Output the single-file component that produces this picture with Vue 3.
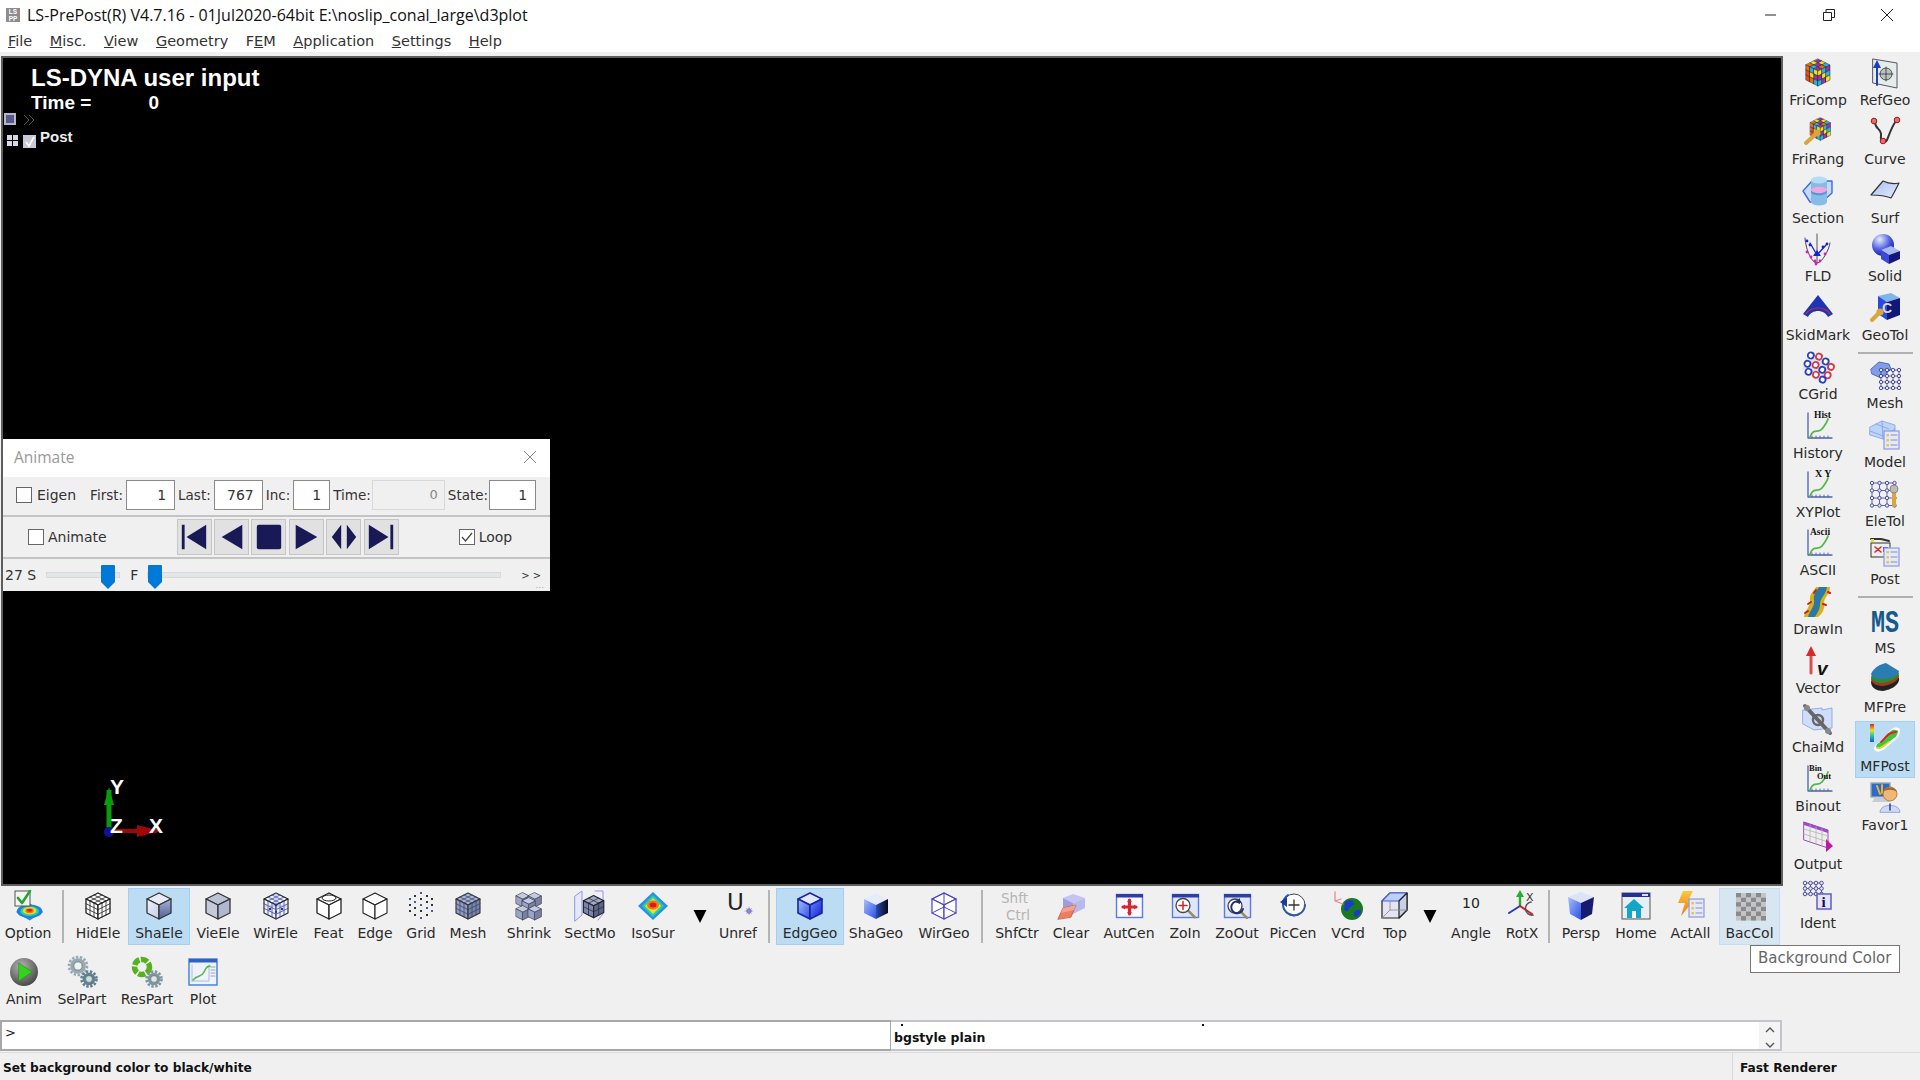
<script setup>
// small svg helpers, every icon is a 32x32 string built from these
const P = (d, f = "none", s = "none", w = 1) =>
  `<path d="${d}" fill="${f}" stroke="${s}" stroke-width="${w}" stroke-linejoin="round" stroke-linecap="round"/>`;
const C = (x, y, r, f = "none", s = "none", w = 1) =>
  `<circle cx="${x}" cy="${y}" r="${r}" fill="${f}" stroke="${s}" stroke-width="${w}"/>`;
const R = (x, y, w, h, f = "none", s = "none", sw = 1) =>
  `<rect x="${x}" y="${y}" width="${w}" height="${h}" fill="${f}" stroke="${s}" stroke-width="${sw}"/>`;
const T = (x, y, txt, size, f = "#111", fam = "Liberation Serif", weight = "bold") =>
  `<text x="${x}" y="${y}" font-size="${size}" fill="${f}" font-family="${fam}" font-weight="${weight}">${txt}</text>`;

const cube = (t, l, r, s = "none", w = 1.3) =>
  P("M16 3L28 9L16 15L4 9Z", t, s, w) + P("M4 9L16 15V29L4 23Z", l, s, w) + P("M16 15L28 9V23L16 29Z", r, s, w);

const faceLines = (o, u, v, n, s, w) => {
  let out = "";
  for (let i = 1; i < n; i++) {
    const k = i / n;
    out += P(`M${o[0] + u[0] * k} ${o[1] + u[1] * k}l${v[0]} ${v[1]}`, "none", s, w);
    out += P(`M${o[0] + v[0] * k} ${o[1] + v[1] * k}l${u[0]} ${u[1]}`, "none", s, w);
  }
  return out;
};
const cubeGrid = (s, w = 0.9, n = 3) =>
  faceLines([16, 3], [12, 6], [-12, 6], n, s, w) +
  faceLines([4, 9], [12, 6], [0, 14], n, s, w) +
  faceLines([16, 15], [12, -6], [0, 14], n, s, w);

const cells = (o, u, v, cols) => {
  const n = Math.sqrt(cols.length);
  let out = "";
  cols.forEach((c, i) => {
    const a = (i % n) / n;
    const b = Math.floor(i / n) / n;
    const x = o[0] + u[0] * a + v[0] * b;
    const y = o[1] + u[1] * a + v[1] * b;
    out += P(`M${x} ${y}l${u[0] / n} ${u[1] / n}l${v[0] / n} ${v[1] / n}l${-u[0] / n} ${-u[1] / n}Z`, c, "#222", 0.5);
  });
  return out;
};
const rubik = () =>
  cells([16, 2], [12, 6], [-12, 6], ["#a02fb0", "#f2e31c", "#23b5e8", "#f2e31c", "#a02fb0", "#ef6a14", "#ef6a14", "#23b5e8", "#a02fb0"]) +
  cells([4, 8], [12, 6], [0, 15], ["#ef6a14", "#23b5e8", "#f2e31c", "#ee4b14", "#f2e31c", "#a02fb0", "#ee4b14", "#ef6a14", "#23b5e8"]) +
  cells([16, 14], [12, -6], [0, 15], ["#f2e31c", "#23b5e8", "#a02fb0", "#a02fb0", "#f2e31c", "#23b5e8", "#23b5e8", "#a02fb0", "#f2e31c"]);

const win = (inner = "", bg = "#dfe6fb", bar = "#2c3ea6") =>
  R(3.5, 4.5, 26, 23, bg, "#5c7ae4", 1.4) + R(3, 4, 27, 3.5, bar) + inner;
const lens = (x, y, r, inner = "") =>
  P(`M${x + r * 0.7} ${y + r * 0.7}l7 7`, "none", "#9a8a5c", 2.6) + C(x, y, r, "#fff", "#444", 1.3) + inner;

const gear = (x, y, r, f = "#8f9ea8", hole = "#e8f0f0") =>
  C(x, y, r, "none", f, 2.6).replace("/>", ` stroke-dasharray="2.4 1.6"/>`) + C(x, y, r - 1.2, f) + C(x, y, r * 0.45, hole, "#567", 0.6);

const chart = (label) =>
  P("M6 3V28H30", "none", "#4f61a8", 1.3) +
  P("M10 28v-2M14 28v-2M18 28v-2M22 28v-2M26 28v-2", "none", "#4f61a8", 0.9) +
  P("M8 27C12 17 16 24 20 19S25 12 26 9", "none", "#52b848", 1.8) +
  label;

const nodes = (x, y, nx, ny, st, s = "#3c3f8f", r = 1.7, f = "#e8e8ff") => {
  let out = "";
  for (let i = 0; i < nx; i++) out += P(`M${x + i * st} ${y}v${(ny - 1) * st}`, "none", s, 0.8);
  for (let j = 0; j < ny; j++) out += P(`M${x} ${y + j * st}h${(nx - 1) * st}`, "none", s, 0.8);
  for (let i = 0; i < nx; i++) for (let j = 0; j < ny; j++) out += C(x + i * st, y + j * st, r, f, s, 0.9);
  return out;
};
const list = (x, y) =>
  R(x, y, 15, 18, "#e4e8fb", "#8c98df", 1.2) +
  P(`M${x + 7} ${y + 4}h6M${x + 7} ${y + 9}h6M${x + 7} ${y + 14}h6`, "none", "#8a90a8", 1) +
  R(x + 2.5, y + 3, 2.4, 2.4, "#e8c63c") + R(x + 2.5, y + 8, 2.4, 2.4, "#e8c63c") + R(x + 2.5, y + 13, 2.4, 2.4, "#e8c63c");
const wrench = (x1, y1, x2, y2, c = "#d8a63c") =>
  P(`M${x1} ${y1}L${x2} ${y2}`, "none", c, 4) + C(x2, y2, 3.6, c);
const blob = () =>
  `<ellipse cx="16" cy="15" rx="15" ry="11" fill="#1c7fe0"/><ellipse cx="16" cy="15" rx="11" ry="8" fill="#22d0b0"/>` +
  `<ellipse cx="16" cy="14" rx="8" ry="6" fill="#e8e020"/><ellipse cx="16" cy="14" rx="5" ry="4" fill="#f07018"/><ellipse cx="16" cy="13.5" rx="3" ry="2.2" fill="#e01818"/>`;

const checker = () => {
  let out = "";
  for (let i = 0; i < 6; i++) for (let j = 0; j < 6; j++) {
    if ((i + j) % 2 === 0) out += R(2 + i * 5, 3 + j * 4.6, 5, 4.6, "#8a8a8a");
    else out += R(2 + i * 5, 3 + j * 4.6, 5, 4.6, "#c4c4c4");
  }
  return out;
};
const small = (x, y) =>
  `<g transform="translate(${x} ${y}) scale(.55)">${cube("#c4cbe0", "#98a4c8", "#76829f", "#445")}</g>`;

const icons = {
  option:
    `<g transform="translate(4 12) scale(.85 .62)">${P("M16 2L32 16L16 30L0 16Z", "#2a86e8")}${blob()}</g>` +
    R(3, 1, 15, 15, "#f4f4f4", "#555", 1) + P("M6 8l4 5l8-12", "none", "#27a52a", 2.6),
  hidele: cube("#fff", "#fff", "#fff", "#222") + cubeGrid("#222", 0.8, 3),
  shaele: cube("#e9ebf7", "url(#gLight)", "url(#gSlate)", "#333"),
  vieele: cube("#bcc2d6", "#c4cadc", "#b0b7ce", "#333"),
  wirele: cube("#f0f2fa", "#f0f2fa", "#f0f2fa", "#222", 1.1) + cubeGrid("#36449c", 0.8, 3) + P("M16 3V29M4 16L28 16", "none", "#8a96cc", 0.7) + C(16, 15, 1.4, "#27348f") + C(10, 19, 1.2, "#27348f") + C(22, 19, 1.2, "#27348f") + C(16, 22, 1.2, "#27348f"),
  feat: cube("#fff", "#fff", "#fff", "#222") + `<ellipse cx="16" cy="8" rx="7" ry="3" fill="none" stroke="#222"/>`,
  edge: cube("#fff", "#fff", "#fff", "#222", 1.1),
  grid: [[16, 3], [10, 6], [22, 6], [5, 9], [16, 9], [27, 9], [10, 12], [22, 12], [5, 15], [16, 15], [27, 15], [10, 18], [22, 18], [5, 21], [16, 21], [27, 21], [10, 25], [22, 25], [16, 28]]
    .map(([x, y], i) => R(x - 1, y - 1, 2, 2, i % 3 === 0 ? "#4b5a96" : "#333")).join(""),
  mesh: cube("#a8b4d8", "#8f9cc4", "#7583ad", "#333", 1.1) + cubeGrid("#3a4060", 0.7, 3),
  shrink: small(1, 1) + small(13, 1) + small(7, 6) + small(1, 14) + small(13, 14),
  sectmo:
    P("M1 6L8 1V25L1 31Z", "#e6e8f8", "#8f96e8", 1) + P("M21 1H29V24L24 30", "#eef0fa", "#8f96e8", 1) +
    `<g transform="translate(6 3) scale(.85)">${cube("#a0aac4", "#7a86a6", "#5c6786", "#223")}${cubeGrid("#223", 0.8, 2)}</g>`,
  isosur: `<g>${P("M16 2L31 16L16 30L1 16Z", "#2a8ee8")}${P("M16 5L27 16L16 27L5 16Z", "#24d0a8")}${P("M16 8L24 16L16 24L8 16Z", "#e4e420")}<ellipse cx="16" cy="15" rx="6" ry="4.6" fill="#f07818"/><ellipse cx="16" cy="15" rx="3.4" ry="2.5" fill="#e01a1a"/></g>`,
  down: P("M9.5 20H22.5L16 33Z", "#000"),
  unref:
    T(5, 20, "U", 23, "#222", "DejaVu Sans", "normal") +
    C(27, 21, 2.3, "#8a8ad8", "#5555aa", 0.7) + P("M27 17v8M23 21h8M24.5 18.5l5 5M24.5 23.5l5-5", "none", "#8a8ad8", 0.6),
  edggeo: cube("#e2e9fb", "url(#gBlueL)", "url(#gBlueR)", "#1a22a8", 1.6),
  shageo: cube("#e6ecfb", "url(#gBlueL)", "url(#gBlack)"),
  wirgeo: cube("#fff", "#fff", "#fff", "#4a44c4", 1.2) + P("M4 9L16 3L28 9M16 17L4 23M16 17L28 23M16 17V3", "none", "#4a44c4", 1),
  shfctr: T(0, 13, "Shft", 13.5, "#b4b4b4", "DejaVu Sans", "normal") + T(5, 30, "Ctrl", 13.5, "#b4b4b4", "DejaVu Sans", "normal"),
  clear:
    P("M8 8L18 4L30 8L18 13Z", "#c3c4f0") + P("M8 8L18 13V24L8 18Z", "#9d9ee0") + P("M18 13L30 8V18L18 24Z", "#b8baee") +
    P("M3 29L8 18L21 15L16 27Z", "#ee7c60", "#c65038", 0.8) + P("M8 18L21 15L19 20L6 23Z", "#f4a090"),
  autcen: win(P("M16.5 10v14M10 17h13", "none", "#d8262c", 3.2) + P("M14 12h5l-2.5-3ZM14 22h5l-2.5 3ZM12 14.5v5l-3-2.5ZM21 14.5v5l3-2.5Z", "#d8262c"), "#fafaff"),
  zoin: win("", "#dfe6fb") + lens(14, 15.5, 7) + P("M10 15.5h8M14 11.5v8", "none", "#d02424", 1.5),
  zoout: win("", "#dfe6fb") + lens(14, 16, 7) + P("M19 12a6 6 0 1 0 3 7", "none", "#222f6a", 2) + P("M14 12l5-4v6Z", "#222f6a"),
  piccen:
    C(17, 15, 11, "#fff", "#445", 1) + P("M28 15A11 11 0 1 1 11 5", "none", "#2d5aa8", 2) + P("M17 10v10M12 15h10", "none", "#333", 1.3) + P("M3 12L10 7V17Z", "#1c3c96"),
  vcrd:
    C(20, 19, 11, "#1a7a24") + P("M13 12c4-3 8-2 9 1s-4 3-5 6s-4 3-5 0ZM23 21c3-2 5-1 6 0s-3 6-5 6s-3-4-1-6Z", "#1c3cc8") +
    P("M3 2v9l8 3M3 11l6-2", "none", "#e88a8a", 1.3),
  top:
    P("M3 11L11 3H28V20L20 28H3Z", "#e4e4f2", "#222", 1.2) + P("M3 11H20L28 3H11Z", "#bcd0fb", "#4c60dc", 1.2) + P("M20 11V28L28 20V3Z", "#c8d0e8", "#222", 1.2) + P("M3 28L11 20H28M11 20V12", "none", "#888", 0.8),
  angle: T(7, 18, "10", 14, "#222", "DejaVu Sans", "normal"),
  rotx:
    P("M14 16V4", "none", "#22b030", 2.4) + P("M10 7L14 0L18 7Z", "#22b030") + P("M14 16L3 23", "none", "#2a34d0", 2) + P("M14 16L26 24", "none", "#d02020", 2) +
    T(20, 11, "X", 11, "#333", "DejaVu Sans", "normal") + P("M25 12a6 6 0 1 0 2 13", "none", "#555", 1.6),
  persp: P("M16 2L29 7L16 13L3 7Z", "#dce4fa") + P("M3 7L16 13V30L5 24Z", "url(#gBlueL)") + P("M16 13L29 7L27 24L16 30Z", "#181c70"),
  home:
    R(2, 3, 28, 26, "#e8eef2", "#555", 1) + R(2, 3, 28, 4, "#1e2f9e") + R(22, 4, 6, 2, "#dde") +
    P("M4 18L14 9L24 18H21V28H7V18Z", "#12a6c8") + R(12, 21, 4, 7, "#fff"),
  actall:
    P("M8 1H18L14 9H20L6 26L10 13H3Z", "url(#gBolt)") + list(14, 9),
  baccol: checker(),
  anim:
    C(16, 16, 14, "url(#gSphere)") + P("M11 7L24 16L11 25Z", "#37d21e", "#1d9a10", 0.7),
  selpart: gear(12, 10, 9, "#98a8b0", "#eef4f0") + gear(23, 23, 7.5, "#5f8090", "#cfe0d8"),
  respart:
    `<circle cx="11" cy="11" r="7.5" fill="none" stroke="#58b020" stroke-width="5.5" stroke-dasharray="7 1.5"/>` + gear(23, 23, 7.5, "#7f96a0", "#dfe8e0"),
  plot:
    R(2, 3, 28, 26, "#eef2fb", "#3f7ed8", 1.4) + R(2, 3, 28, 3.5, "#2f62c0") + P("M5 25H22V9M5 9V25", "none", "#9fb0d0", 0.8) + P("M6 24C12 18 14 22 17 16S20 11 23 10", "none", "#55b848", 1.6) + P("M24 11h4M24 14h4M24 17h4M24 20h4", "none", "#9aa4c4", 1.2),

  fricomp: rubik(),
  refgeo:
    P("M4 2L28 6V31L4 26Z", "#e6ecea", "#556", 1) + C(17, 17, 6, "#b8c4c0", "#333", 0.8) + P("M17 10v14M10 17h14", "none", "#333", 0.8) + P("M8 28V9", "none", "#1e3cc0", 2) + P("M4 11L8 3L12 11Z", "#1e3cc0"),
  frirang: `<g transform="translate(5 0) scale(.84)">${rubik()}</g>` + wrench(4, 27, 15, 17),
  curve: P("M6 6C6 14 13 12 12 20C11 26 16 28 18 24C20 19 23 10 27 5", "none", "#333", 2) + C(5, 5, 2.8, "#e86a6a", "#a01818", 1) + C(14, 25, 2.8, "#e86a6a", "#a01818", 1) + C(28, 4, 2.8, "#e86a6a", "#a01818", 1),
  surf: P("M2 20L14 6C20 9 25 9 30 8C27 14 24 20 22 23C15 20 8 20 2 20Z", "url(#gSurf)", "#333", 1.2),
  section:
    P("M1 16L10 6H30V18L20 27H8Z", "#c8dafc", "#3c6be8", 1.4) +
    P("M9 5V27A8 3.4 0 0 0 25 27V5Z", "#86bce6") + `<ellipse cx="17" cy="5" rx="8" ry="3.4" fill="#b4dcf4"/>` +
    `<ellipse cx="17" cy="15" rx="8" ry="3.2" fill="#f4a4de"/>` + P("M9 15A8 3.2 0 0 0 25 15V17A8 3.2 0 0 1 9 17Z", "#5a94d4"),
  fld:
    P("M15 1V30", "none", "#555", 1) + P("M3 5C4 18 10 30 15 30S27 17 28 10", "none", "#444", 1) + P("M8 10L15 22L24 12", "none", "#1a20d8", 1.3) + P("M15 17l-4 6h8Z", "#1a20d8") +
    [[5, 8], [8, 12], [25, 11], [21, 14]].map(([x, y]) => C(x, y, 1.4, "#1a20d8")).join("") +
    [[5, 19], [9, 24], [13, 28], [18, 28], [23, 21], [14, 31]].map(([x, y]) => C(x, y, 1.4, "#e018c0")).join(""),
  solid:
    C(14, 12, 11, "url(#gBall)") + P("M12 17L22 13L31 18L20 22Z", "#a8b8f0") + P("M12 17L20 22V31L12 26Z", "#3c48d8") + P("M20 22L31 18V26L20 31Z", "#14187c"),
  skidmark:
    P("M1 22L16 3L31 22L26 25C22 17 10 17 6 25Z", "#1c34b8") + P("M4 22C9 14 23 14 28 22", "none", "#d82828", 1.2),
  geotol:
    P("M9 4L22 1L31 6L18 10Z", "#80b4ee") + P("M9 4L18 10V28L9 22Z", "#2848e0") + P("M18 10L31 6V23L18 28Z", "#101878") + T(13, 21, "C", 14, "#d8d8d8", "Liberation Sans") + wrench(3, 28, 11, 20),
  cgrid:
    `<g transform="rotate(22 16 16)">${R(2, 8, 28, 16, "#dfe4fa")}${[[5, 8], [13, 6], [21, 8], [28, 11], [5, 17], [13, 15], [21, 17], [28, 20], [9, 24], [17, 24], [25, 26]]
      .map(([x, y], i) => C(x, y, 3, "#fff", i % 2 ? "#d83848" : "#2840b8", 1.8)).join("")}</g>`,
  panelmesh:
    P("M2 9L10 2L20 4L22 9L12 18L3 14Z", "#7f9ee8", "#3c52a8", 0.8) + nodes(12, 10, 4, 4, 6),
  history: chart(T(12, 8, "Hist", 9.5)),
  model:
    P("M1 8L13 2L26 6V14L14 20L1 16Z", "#bcd4f6", "#7f9ee8", 0.8) + P("M1 12L14 17L26 10M7 5L20 10M13 2L14 20", "none", "#7f9ee8", 0.8) + list(15, 12),
  eletol: nodes(3, 5, 4, 4, 7.5) + wrench(25, 27, 25, 11, "#d8a63c") + C(25, 11, 4, "#bbb", "#777", 0.8),
  xyplot: chart(T(13, 8, "X Y", 10)),
  post:
    R(2, 7, 19, 14, "#eee", "#333", 1) + P("M2 3h10l8 2", "none", "#333", 2) + P("M6 11l6 5M12 11l-6 5", "none", "#d82828", 1.6) + P("M14 11h5v5h-5Z", "#2840d8") + R(2, 3, 3, 3, "#eee020") + list(15, 12),
  ascii: chart(T(8, 8, "Ascii", 9.5)),
  drawin:
    P("M14 1H28C28 9 21 12 22 18S19 29 16 31H2C3 24 9 20 8 14S12 5 14 1Z", "#d8b018") + P("M17 1H25C24 9 18 12 18 18S15 27 13 31H6C8 24 13 20 12 14S15 5 17 1Z", "#2a78a8") + P("M14 4l-2 3M9 16l-3 2M6 25l-3 2M26 6l2 1M21 18l3 1", "none", "#c82020", 2),
  ms: `<text x="2" y="27" font-size="32" font-weight="bold" fill="#145a8c" font-family="Liberation Mono" textLength="28" lengthAdjust="spacingAndGlyphs">MS</text>`,
  vector: P("M9 28V8", "none", "#d85050", 3) + P("M4 11L9 1L14 11Z", "#d82828") + `<text x="15" y="30" font-size="19" font-style="italic" font-weight="bold" fill="#111" font-family="Liberation Sans">v</text>`,
  mfpre:
    P("M2 18C5 9 12 5 17 3L30 14C31 22 20 26 14 27C8 27 2 24 2 18Z", "#222") + P("M2 15C5 6 12 3 17 1L30 11C31 17 21 21 14 22C8 22 3 20 2 15Z", "#a03c1c") + P("M2 13C5 5 12 2 17 0L30 9C30 14 21 18 14 19C8 19 3 17 2 13Z", "#2c8a38") + P("M2 10C5 3 12 0 17 -1L30 7C30 11 21 15 14 15C8 15 3 14 2 10Z", "#2c7cb4"),
  chaimd:
    P("M1 6L20 4V6L30 4V24L12 26L1 20Z", "#cfdcfa", "#7f9ee8", 0.8) + P("M3 2L28 29", "none", "#666", 4) + C(5, 4, 3, "#888") + C(16, 16, 5, "none", "#666", 2.4) + C(26, 27, 3, "#888"),
  mfpost:
    R(1, 1, 4, 18, "url(#gRain)") + P("M5 26C6 18 14 20 18 12S27 3 31 6C32 15 24 18 19 23S8 31 5 26Z", "#fff") + P("M7 24C8 18 14 20 18 13S26 6 29 8C29 14 23 16 19 20S10 28 7 24Z", "#3cc83c") + P("M12 19C15 17 18 12 20 11S25 9 27 9", "none", "#e02020", 2) + P("M8 25C12 26 17 21 20 19", "none", "#e8d820", 1.8),
  binout: chart(T(7, 8, "Bin", 8.5) + T(15, 16, "Out", 8.5)),
  favor1:
    R(2, 1, 19, 14, "#2a6cc8", "#9aa", 1.4) + P("M8 4l3 8M13 3v8", "none", "#f0b030", 2) + P("M3 20h18l-2-5H6Z", "#c8ccd4") +
    C(21, 12, 7, "#f0b878", "#a87028", 0.8) + P("M14 10C15 4 27 4 28 10C24 7 18 7 14 10Z", "#a86824") + P("M11 30C11 21 31 21 31 30Z", "#cfd8f4", "#8898c8", 0.8) + P("M21 22v6", "none", "#2848b8", 1.6),
  output:
    P("M2 1L26 9V27L2 19Z", "#eeeeee", "#9a4ac8", 1) + P("M2 1L26 9V12L2 4Z", "#9a4ac8") + P("M2 8L26 15M2 13L26 21M8 4V21M14 6V23M20 8V25", "none", "#b4b4b4", 0.8) + P("M24 18L31 25L24 31Z", "#c018a0"),
  ident:
    nodes(3, 3, 4, 3, 5.5, "#3c3f8f", 1.8) + R(15, 14, 14, 15, "#e4e4fa", "#6a64c8", 1.6) + T(19.5, 27, "i", 15, "#101058", "Liberation Serif"),
};

const bar1 = [
  { k: "option", t: "Option", w: 56 },
  { sep: true, l: 6, r: 4 },
  { k: "hidele", t: "HidEle", w: 60 },
  { k: "shaele", t: "ShaEle", w: 62, on: true },
  { k: "vieele", t: "VieEle", w: 56 },
  { k: "wirele", t: "WirEle", w: 59 },
  { k: "feat", t: "Feat", w: 47 },
  { k: "edge", t: "Edge", w: 46 },
  { k: "grid", t: "Grid", w: 46 },
  { k: "mesh", t: "Mesh", w: 48 },
  { k: "shrink", t: "Shrink", w: 74 },
  { k: "sectmo", t: "SectMo", w: 48 },
  { k: "isosur", t: "IsoSur", w: 78 },
  { k: "down", t: "", w: 16 },
  { k: "unref", t: "Unref", w: 60 },
  { sep: true, l: 0, r: 6 },
  { k: "edggeo", t: "EdgGeo", w: 68, on: true },
  { k: "shageo", t: "ShaGeo", w: 64 },
  { k: "wirgeo", t: "WirGeo", w: 72 },
  { sep: true, l: 1, r: 7 },
  { k: "shfctr", t: "ShfCtr", w: 54 },
  { k: "clear", t: "Clear", w: 54 },
  { k: "autcen", t: "AutCen", w: 62 },
  { k: "zoin", t: "ZoIn", w: 50 },
  { k: "zoout", t: "ZoOut", w: 54 },
  { k: "piccen", t: "PicCen", w: 58 },
  { k: "vcrd", t: "VCrd", w: 52 },
  { k: "top", t: "Top", w: 42 },
  { k: "down", t: "", w: 28 },
  { k: "angle", t: "Angle", w: 54 },
  { k: "rotx", t: "RotX", w: 48 },
  { sep: true, l: 2, r: 2 },
  { k: "persp", t: "Persp", w: 58 },
  { k: "home", t: "Home", w: 52 },
  { k: "actall", t: "ActAll", w: 57 },
  { k: "baccol", t: "BacCol", w: 61, hover: true },
];
const bar2 = [
  { k: "anim", t: "Anim", w: 48 },
  { k: "selpart", t: "SelPart", w: 68 },
  { k: "respart", t: "ResPart", w: 62 },
  { k: "plot", t: "Plot", w: 50 },
];
const col1 = [
  ["fricomp", "FriComp"], ["frirang", "FriRang"], ["section", "Section"], ["fld", "FLD"], ["skidmark", "SkidMark"],
  ["cgrid", "CGrid"], ["history", "History"], ["xyplot", "XYPlot"], ["ascii", "ASCII"], ["drawin", "DrawIn"],
  ["vector", "Vector"], ["chaimd", "ChaiMd"], ["binout", "Binout"], ["output", "Output"], ["ident", "Ident"],
].map(([k, t]) => ({ k, t }));
const col2 = [
  { k: "refgeo", t: "RefGeo" }, { k: "curve", t: "Curve" }, { k: "surf", t: "Surf" }, { k: "solid", t: "Solid" }, { k: "geotol", t: "GeoTol" },
  { sep: true },
  { k: "panelmesh", t: "Mesh" }, { k: "model", t: "Model" }, { k: "eletol", t: "EleTol" }, { k: "post", t: "Post" },
  { sep: true, wide: true },
  { k: "ms", t: "MS" }, { k: "mfpre", t: "MFPre" }, { k: "mfpost", t: "MFPost", on: true }, { k: "favor1", t: "Favor1" },
];
const menus = [
  ["", "F", "ile"], ["", "M", "isc."], ["", "V", "iew"], ["", "G", "eometry"],
  ["F", "E", "M"], ["", "A", "pplication"], ["", "S", "ettings"], ["", "H", "elp"],
];
const fields = [
  { label: "First:", val: "1", w: 49, g: 3 },
  { label: "Last:", val: "767", w: 49, g: 3 },
  { label: "Inc:", val: "1", w: 37, g: 3 },
  { label: "Time:", val: "0", w: 73, g: 1, off: true },
  { label: "State:", val: "1", w: 47, g: 1 },
];
const playback = [
  "M3 3h3v26H3ZM29 3V29L8 16Z",
  "M27 3V29L5 16Z",
  "M5 3H27Q29 3 29 5V27Q29 29 27 29H5Q3 29 3 27V5Q3 3 5 3Z",
  "M5 3V29L28 16Z",
  "M13 3V29L3 16ZM19 3V29L29 16Z",
  "M3 3V29L24 16ZM26 3h3v26h-3Z",
];
</script>

<template>
  <div class="app">
    <svg class="defs" width="0" height="0">
      <defs>
        <linearGradient id="gLight" x1="0" y1="0" x2="1" y2="1"><stop offset="0" stop-color="#f0f2fb" /><stop offset="1" stop-color="#c3cbe8" /></linearGradient>
        <linearGradient id="gSlate" x1="0" y1="0" x2="0" y2="1"><stop offset="0" stop-color="#a8b3d8" /><stop offset="1" stop-color="#4f5f96" /></linearGradient>
        <linearGradient id="gBlueL" x1="0" y1="0" x2="1" y2="1"><stop offset="0" stop-color="#a8c0fa" /><stop offset="1" stop-color="#2a50e8" /></linearGradient>
        <linearGradient id="gBlueR" x1="0" y1="0" x2="1" y2="1"><stop offset="0" stop-color="#6a88f8" /><stop offset="1" stop-color="#0c20d8" /></linearGradient>
        <linearGradient id="gBlack" x1="0" y1="0" x2="1" y2="0"><stop offset="0" stop-color="#2a4cb0" /><stop offset="1" stop-color="#060818" /></linearGradient>
        <linearGradient id="gSurf" x1="0" y1="0" x2="1" y2="1"><stop offset="0" stop-color="#a8bcf4" /><stop offset="1" stop-color="#e4ecfc" /></linearGradient>
        <linearGradient id="gBolt" x1="0" y1="0" x2="0" y2="1"><stop offset="0" stop-color="#f8c83c" /><stop offset="1" stop-color="#f07818" /></linearGradient>
        <linearGradient id="gRain" x1="0" y1="0" x2="0" y2="1"><stop offset="0" stop-color="#e02020" /><stop offset=".35" stop-color="#e8e020" /><stop offset=".65" stop-color="#20c8a0" /><stop offset="1" stop-color="#2050e0" /></linearGradient>
        <radialGradient id="gSphere" cx=".4" cy=".3" r=".8"><stop offset="0" stop-color="#b4b4b4" /><stop offset="1" stop-color="#3c3c3c" /></radialGradient>
        <radialGradient id="gBall" cx=".35" cy=".25" r=".8"><stop offset="0" stop-color="#e4ecfc" /><stop offset=".6" stop-color="#4858e0" /><stop offset="1" stop-color="#141c90" /></radialGradient>
      </defs>
    </svg>

    <header class="titlebar">
      <div class="appicon"><span>LS</span><span>PP</span></div>
      <div class="title">LS-PrePost(R) V4.7.16 - 01Jul2020-64bit E:\noslip_conal_large\d3plot</div>
      <div class="winbtns">
        <svg width="58" height="28" viewBox="0 0 58 28"><path d="M24 14h11" stroke="#222" /></svg>
        <svg width="58" height="28" viewBox="0 0 58 28"><path d="M24.5 11.5h8v8h-8ZM27 11.5v-3h8.5v8h-3" fill="none" stroke="#222" /></svg>
        <svg width="58" height="28" viewBox="0 0 58 28"><path d="M24 8l12 12M36 8l-12 12" fill="none" stroke="#222" /></svg>
      </div>
    </header>

    <nav class="menubar">
      <span v-for="m in menus" :key="m[1] + m[2]">{{ m[0] }}<u>{{ m[1] }}</u>{{ m[2] }}</span>
    </nav>

    <div class="workspace">
      <div class="leftside">
        <div class="canvas">
          <div class="ov-title">LS-DYNA user input</div>
          <div class="ov-time"><span>Time =</span><span class="ov-zero">0</span></div>
          <div class="ov-box"></div>
          <svg class="ov-chev" width="12" height="12" viewBox="0 0 12 12"><path d="M1 1l5 5l-5 5M6 1l5 5l-5 5" fill="none" stroke="#555" /></svg>
          <svg class="ov-grid" width="11" height="11" viewBox="0 0 11 11"><path d="M0 0h5v5H0ZM6 0h5v5H6ZM0 6h5v5H0ZM6 6h5v5H6Z" fill="#d8d8e8" /></svg>
          <svg class="ov-check" width="13" height="13" viewBox="0 0 13 13"><rect width="13" height="13" fill="#c8c8d8" /><path d="M3 7l3 4l5-9" fill="none" stroke="#fff" stroke-width="1.6" /></svg>
          <div class="ov-post">Post</div>

          <svg class="triad" width="80" height="80" viewBox="0 -10 80 80">
            <path d="M18 52V12" stroke="#0a9a0a" stroke-width="5" />
            <path d="M18 9L23 27H13Z" fill="#0a9a0a" />
            <path d="M20 53H66" stroke="#a00808" stroke-width="4" />
            <path d="M46 47L70 53L46 59Z" fill="#a00808" />
            <circle cx="18" cy="54" r="5" fill="#10109a" />
            <text x="19" y="16" class="axis">Y</text>
            <text x="19" y="55" class="axis">Z</text>
            <text x="58" y="55" class="axis">X</text>
          </svg>

          <section class="dialog">
            <div class="dlg-head">
              <span>Animate</span>
              <svg width="12" height="12" viewBox="0 0 12 12"><path d="M0 0l12 12M12 0L0 12" stroke="#888" fill="none" /></svg>
            </div>
            <div class="dlg-row dlg-first">
              <label class="chk"><i></i>Eigen</label>
              <div v-for="f in fields" :key="f.label" class="field" :style="{ gap: f.g + 'px' }">
                <span>{{ f.label }}</span>
                <div class="numbox" :class="{ off: f.off }" :style="{ width: f.w + 'px' }">{{ f.val }}</div>
              </div>
            </div>
            <div class="dlg-row dlg-second">
              <label class="chk"><i></i>Animate</label>
              <div class="playbtns">
                <button v-for="d in playback" :key="d" class="pbtn">
                  <svg width="30" height="30" viewBox="0 0 32 32"><path :d="d" fill="#191a55" /></svg>
                </button>
              </div>
              <label class="chk loop">
                <i><svg width="14" height="14" viewBox="0 0 14 14"><path d="M2 7l3.5 4L12 3" fill="none" stroke="#444" stroke-width="1.2" /></svg></i>Loop
              </label>
            </div>
            <div class="dlg-row dlg-third">
              <span class="s-txt">27 S</span>
              <div class="track t1">
                <svg class="thumb" width="14" height="24" viewBox="0 0 13 24" preserveAspectRatio="none"><path d="M1 0H12Q13 0 13 1V17L6.5 24L0 17V1Q0 0 1 0Z" fill="#0078d7" /></svg>
              </div>
              <span class="s-f">F</span>
              <div class="track t2">
                <svg class="thumb" width="14" height="24" viewBox="0 0 13 24" preserveAspectRatio="none"><path d="M1 0H12Q13 0 13 1V17L6.5 24L0 17V1Q0 0 1 0Z" fill="#0078d7" /></svg>
              </div>
              <span class="s-more">&gt; &gt;</span>
              <span class="grip">...</span>
            </div>
          </section>
        </div>

        <div class="toolrow">
          <template v-for="(b, i) in bar1" :key="i">
            <div v-if="b.sep" class="vsep" :style="{ marginLeft: b.l + 'px', marginRight: b.r + 'px' }"></div>
            <div v-else class="tool" :class="{ on: b.on, hover: b.hover }" :style="{ width: b.w + 'px' }">
              <svg width="32" height="32" viewBox="0 0 32 32" v-html="icons[b.k]"></svg>
              <span>{{ b.t }}</span>
            </div>
          </template>
        </div>
        <div class="toolrow second">
          <div v-for="b in bar2" :key="b.k" class="tool" :style="{ width: b.w + 'px' }">
            <svg width="32" height="32" viewBox="0 0 32 32" v-html="icons[b.k]"></svg>
            <span>{{ b.t }}</span>
          </div>
        </div>

        <div class="cmdrow">
          <div class="cmd-in">&gt;</div>
          <div class="cmd-out">
            <i class="speck s1"></i>
            <i class="speck s2"></i>
            <b>bgstyle plain</b>
            <div class="scroller">
              <svg width="12" height="30" viewBox="0 0 12 30"><path d="M2 10l4-4l4 4M2 21l4 4l4-4" fill="none" stroke="#555" stroke-width="1.4" /></svg>
            </div>
          </div>
        </div>
      </div>

      <aside class="panel">
        <div class="pcol">
          <div v-for="b in col1" :key="b.k" class="tool ptool">
            <svg width="32" height="32" viewBox="0 0 32 32" v-html="icons[b.k]"></svg>
            <span>{{ b.t }}</span>
          </div>
        </div>
        <div class="pcol right">
          <template v-for="(b, i) in col2" :key="i">
            <div v-if="b.sep" class="hsep" :class="{ wide: b.wide }"></div>
            <div v-else class="tool ptool" :class="{ on: b.on }">
              <svg width="32" height="32" viewBox="0 0 32 32" v-html="icons[b.k]"></svg>
              <span>{{ b.t }}</span>
            </div>
          </template>
        </div>
      </aside>
    </div>

    <footer class="statusbar">
      <b class="st-msg">Set background color to black/white</b>
      <b class="st-fast">Fast Renderer</b>
    </footer>

    <div class="tooltip">Background Color</div>
  </div>
</template>

<style>
html, body { margin: 0; background: #f0f0f0; }
</style>

<style scoped>
.app {
  position: relative;
  width: 1920px;
  height: 1080px;
  overflow: hidden;
  display: flex;
  flex-direction: column;
  background: #f0f0f0;
  font-family: "DejaVu Sans", sans-serif;
  color: #222;
}
.defs { position: absolute; }

.titlebar {
  height: 30px;
  display: flex;
  align-items: center;
  background: #fff;
}
.appicon {
  width: 14px;
  height: 14px;
  margin-left: 6px;
  background: #8c8c8c;
  color: #fff;
  font: bold 6.5px/7px "Liberation Sans", sans-serif;
  display: flex;
  flex-direction: column;
  align-items: center;
}
.title {
  margin-left: 7px;
  font: 16px "Open Sans", sans-serif;
  color: #111;
  white-space: nowrap;
}
.winbtns {
  margin-left: auto;
  margin-right: 5px;
  display: flex;
}
.menubar {
  height: 22px;
  display: flex;
  align-items: center;
  gap: 17.5px;
  padding-left: 8px;
  background: #fff;
  font-size: 14.5px;
  color: #333;
}

.workspace {
  height: 1000px;
  display: flex;
}
.leftside {
  width: 1785px;
  flex: none;
  padding-top: 4px;
}
.canvas {
  position: relative;
  width: 1778px;
  height: 826px;
  margin-left: 1px;
  background: #000;
  border: 2px solid #5e5e5e;
}
.ov-title {
  position: absolute;
  left: 28px;
  top: 6px;
  font: bold 24px "Liberation Sans", sans-serif;
  color: #fff;
  white-space: nowrap;
}
.ov-time {
  position: absolute;
  left: 28px;
  top: 34px;
  font: bold 19px "Liberation Sans", sans-serif;
  color: #fff;
  display: flex;
}
.ov-zero { margin-left: 57px; }
.ov-box {
  position: absolute;
  left: 1px;
  top: 55px;
  width: 8px;
  height: 8px;
  background: #5a5a90;
  border: 2px solid #b8b8c8;
}
.ov-chev { position: absolute; left: 20px; top: 56px; }
.ov-grid { position: absolute; left: 4px; top: 77px; }
.ov-check { position: absolute; left: 20px; top: 77px; }
.ov-post {
  position: absolute;
  left: 37px;
  top: 70px;
  font: bold 15px "Liberation Sans", sans-serif;
  color: #eee;
}
.triad { position: absolute; left: 88px; top: 710px; }
.axis {
  font: bold 21px "Liberation Sans", sans-serif;
  fill: #fff;
}

.dialog {
  position: absolute;
  left: 0;
  top: 381px;
  width: 547px;
  height: 152px;
  background: #f0f0f0;
  font-size: 13.5px;
  color: #333;
}
.dlg-head {
  box-sizing: border-box;
  height: 38px;
  background: #fff;
  display: flex;
  align-items: center;
  justify-content: space-between;
  padding: 0 14px 2px 11px;
  font: 15.5px "Open Sans", sans-serif;
  color: #999;
}
.dlg-row { display: flex; align-items: center; position: relative; }
.dlg-first {
  box-sizing: border-box;
  height: 40px;
  padding: 0 0 2px 13px;
  border-bottom: 2px solid #c4c4c4;
}
.dlg-second {
  height: 40px;
  padding-left: 25px;
  border-bottom: 2px solid #c4c4c4;
}
.dlg-third { height: 32px; padding-left: 2px; font-size: 14px; }
.chk { display: flex; align-items: center; gap: 4px; font-size: 14px; }
.chk i {
  width: 14px;
  height: 14px;
  border: 1px solid #666;
  background: #fff;
  display: block;
}
.chk svg { display: block; }
.dlg-first .chk { margin-right: 11px; gap: 5px; }
.field { display: flex; align-items: center; margin-left: 3px; }
.numbox {
  height: 30px;
  box-sizing: border-box;
  background: #fff;
  border: 1px solid #8a8a8a;
  text-align: right;
  padding-right: 8px;
  line-height: 28px;
  font-size: 14px;
}
.numbox.off {
  background: #f0f0f0;
  border: 1px solid #d8d8d8;
  color: #888;
  font-size: 13px;
  padding-right: 6px;
}
.playbtns { display: flex; gap: 2.4px; margin-left: 70px; }
.pbtn {
  width: 35px;
  height: 36px;
  padding: 0;
  display: flex;
  align-items: center;
  justify-content: center;
  background: #e1e1e1;
  border: 1px solid #c6c6c6;
}
.loop { margin-left: 60px; }

.track {
  position: relative;
  height: 4px;
  background: #e2e6e6;
  border: 1px solid #d6dada;
}
.t1 { width: 72px; margin-left: 10px; }
.t2 { width: 352px; margin-left: 9px; }
.thumb { position: absolute; top: -8px; }
.t1 .thumb { left: 54px; }
.t2 .thumb { left: 0; }
.s-f { margin-left: 10px; }
.s-more { margin-left: 20px; font-size: 10px; white-space: nowrap; }
.grip {
  position: absolute;
  right: 6px;
  bottom: 2px;
  font-size: 9px;
  line-height: 8px;
  color: #aaa;
}

.toolrow {
  display: flex;
  height: 57px;
  margin-top: 2px;
}
.toolrow.second { margin-top: 9px; }
.tool {
  box-sizing: border-box;
  flex: none;
  height: 57px;
  display: flex;
  flex-direction: column;
  align-items: center;
  padding-top: 2px;
  font-size: 14px;
  color: #2a2a2a;
  white-space: nowrap;
}
.tool svg { flex: none; overflow: visible; }
.tool span {
  height: 22px;
  line-height: 23px;
}
.tool.on {
  background: #bcdcf4;
  box-shadow: inset 0 0 0 1px #a4cff2;
}
.tool.hover {
  background: #d8e6f2;
  box-shadow: inset 0 0 0 1px #c6dcf0;
}
.vsep {
  width: 2px;
  height: 53px;
  margin-top: 2px;
  background: #b4b4b4;
  flex: none;
}

.cmdrow {
  display: flex;
  width: 1782px;
  height: 31px;
  margin-top: 9px;
  font-size: 13px;
}
.cmd-in {
  width: 891px;
  box-sizing: border-box;
  background: #fff;
  border: 2px solid #a8a8a8;
  border-right-width: 1px;
  padding: 3px 0 0 3px;
}
.cmd-out {
  position: relative;
  flex: 1;
  box-sizing: border-box;
  background: #fff;
  border: 2px solid #c4c4cc;
  border-left: none;
  padding: 7px 0 0 3px;
  line-height: 17px;
  font-size: 12.5px;
}
.cmd-out b { color: #111; }
.speck {
  position: absolute;
  top: 2px;
  width: 2px;
  height: 2px;
  background: #111;
}
.s1 { left: 10px; }
.s2 { left: 311px; }
.scroller {
  position: absolute;
  right: 0;
  top: 0;
  width: 21px;
  height: 27px;
  background: #f4f4f4;
  display: flex;
  justify-content: center;
}

.panel {
  display: flex;
  padding-top: 3px;
}
.pcol {
  width: 66px;
  display: flex;
  flex-direction: column;
  align-items: center;
}
.pcol.right { margin-left: 1px; }
.ptool {
  width: 60px;
  margin-bottom: 1.8px;
}
.hsep {
  width: 55px;
  height: 2px;
  flex: none;
  margin: 3px 0 4px;
  background: #b0b0b0;
}
.hsep.wide { margin-bottom: 5px; }

.statusbar {
  flex: 1;
  position: relative;
  display: flex;
  align-items: center;
  padding: 2px 0 0 3px;
  border-top: 1px solid #dcdcdc;
  font-size: 12.2px;
  color: #111;
}
.st-fast {
  position: absolute;
  left: 1732px;
  top: 0;
  bottom: 0;
  padding: 2px 0 0 7px;
  border-left: 1px solid #d8d8d8;
  display: flex;
  align-items: center;
}

.tooltip {
  position: absolute;
  left: 1750px;
  top: 945px;
  width: 150px;
  height: 28px;
  box-sizing: border-box;
  background: #fff;
  border: 1px solid #767676;
  padding-left: 7px;
  font-size: 15px;
  line-height: 25px;
  color: #666;
  white-space: nowrap;
}
</style>
